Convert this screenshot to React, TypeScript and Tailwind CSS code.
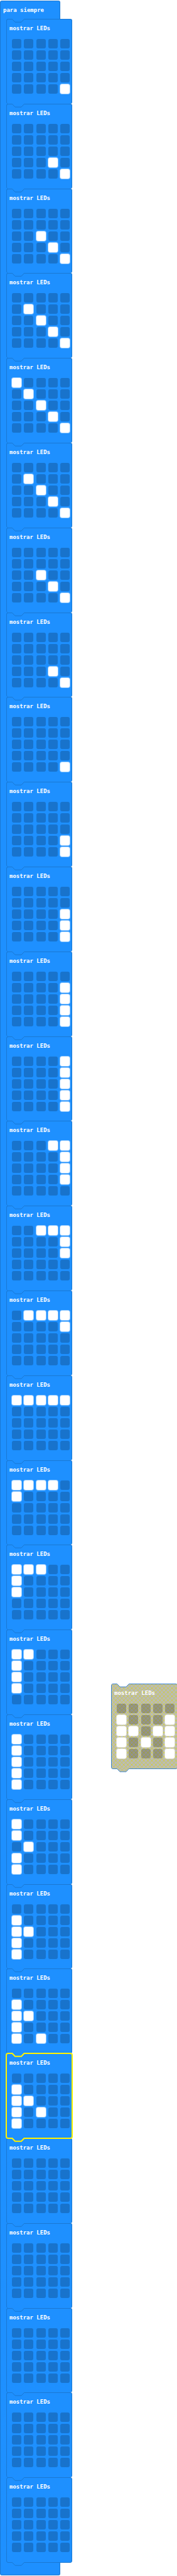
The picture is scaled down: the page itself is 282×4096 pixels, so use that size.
type Pattern = string;

const FRAMES: Pattern[] = [
  "..... ..... ..... ..... ....#",
  "..... ..... ..... ...#. ....#",
  "..... ..... ..#.. ...#. ....#",
  "..... .#... ..#.. ...#. ....#",
  "#.... .#... ..#.. ...#. ....#",
  "..... .#... ..#.. ...#. ....#",
  "..... ..... ..#.. ...#. ....#",
  "..... ..... ..... ...#. ....#",
  "..... ..... ..... ..... ....#",
  "..... ..... ..... ....# ....#",
  "..... ..... ....# ....# ....#",
  "..... ....# ....# ....# ....#",
  "....# ....# ....# ....# ....#",
  "...## ....# ....# ....# .....",
  "..### ....# ....# ..... .....",
  ".#### ....# ..... ..... .....",
  "##### ..... ..... ..... .....",
  "####. #.... ..... ..... .....",
  "###.. #.... #.... ..... .....",
  "##... #.... #.... #.... .....",
  "#.... #.... #.... #.... #....",
  "#.... #.... .#... #.... #....",
  "..... #.... ##... #.... #....",
  "..... #.... ##... #.... #.#..",
  "..... #.... ##... #.#.. #....",
  "..... ..... ..... ..... .....",
  "..... ..... ..... ..... .....",
  "..... ..... ..... ..... .....",
  "..... ..... ..... ..... .....",
  "..... ..... ..... ..... .....",
];

const SELECTED = 24;
const DISABLED: Pattern = "..... #...# ##.## #.#.# #...#";

function Leds({ pattern, off }: { pattern: Pattern; off: string }) {
  return (
    <div className="ml-2 grid w-[92px] grid-cols-[repeat(5,15px)] justify-between gap-y-[3px]">
      {pattern
        .replace(/ /g, "")
        .split("")
        .map((c, i) => (
          <input
            key={i}
            type="checkbox"
            defaultChecked={c === "#"}
            aria-label={`LED ${(i % 5) + 1}, ${Math.floor(i / 5) + 1}`}
            className={`m-0 block size-[15px] appearance-none rounded-[3px] checked:bg-white checked:ring-1 checked:ring-white/50 ${off}`}
          />
        ))}
    </div>
  );
}

type NotchProps = { place: string; fill: string; stroke: string; thick?: boolean; hatched?: boolean };

function Notch({ place, fill, stroke, thick = false, hatched = false }: NotchProps) {
  const body = "M1 0H21V1.5L20.5 1.5L16 6H6L1.5 1.5H1Z";
  return (
    <svg
      aria-hidden="true"
      width="22"
      height="8"
      viewBox={thick ? "0 -0.5 22 8" : "0 0 22 8"}
      className={`absolute left-[7px] ${place}`}
    >
      <path d={body} fill={fill} />
      {hatched && <path d={body} fill="url(#hatch)" />}
      <path
        d="M0 1.5H1.5L6 6.2H16L20.5 1.5H22"
        fill="none"
        stroke={stroke}
        strokeWidth={thick ? 2 : 1}
        strokeLinejoin="round"
      />
    </svg>
  );
}

function Block({ pattern, selected, last }: { pattern: Pattern; selected: boolean; last: boolean }) {
  const stroke = selected ? "#fff200" : "#1a78d2";
  const frame = selected
    ? "z-10 px-px pt-px outline-2 -outline-offset-1 outline-[#fff200]"
    : last
      ? "border border-[#1a78d2]"
      : "border border-b-0 border-[#1a78d2]";
  return (
    <section className={`relative flex flex-1 flex-col rounded-[3px] bg-[#1e90ff] pb-3 ${frame}`}>
      <Notch place={selected ? "-top-[2px] ml-px" : "-top-[2px]"} fill="#1e90ff" stroke={stroke} thick={selected} />
      {(selected || last) && (
        <Notch
          place={selected ? "-bottom-[6px] ml-px" : "-bottom-[7px]"}
          fill="#1e90ff"
          stroke={stroke}
          thick={selected}
        />
      )}
      <h2 className="mt-2 mb-[11px] pl-1 text-[9px] leading-3 font-bold whitespace-nowrap text-white">mostrar LEDs</h2>
      <Leds pattern={pattern} off="bg-[#1873cc]" />
    </section>
  );
}

function DisabledBlock() {
  return (
    <section className="relative flex w-[106px] flex-col rounded-[3px] border border-[#3f86cf] bg-[#bbbbbb] pb-4">
      <svg aria-hidden="true" className="absolute inset-0 size-full">
        <defs>
          <pattern id="hatch" width="6.4" height="6.4" patternUnits="userSpaceOnUse">
            <path d="M0 0L6.4 6.4M6.4 0L0 6.4" stroke="#cfcf38" strokeWidth="0.9" />
          </pattern>
        </defs>
        <rect width="100%" height="100%" fill="url(#hatch)" />
      </svg>
      <Notch place="-top-[2px]" fill="#ffffff" stroke="#3f86cf" />
      <Notch place="-bottom-[7px]" fill="#bbbbbb" stroke="#3f86cf" hatched />
      <h2 className="relative mt-2 mb-[11px] pl-1 text-[9px] leading-3 font-bold whitespace-nowrap text-white">
        mostrar LEDs
      </h2>
      <div className="relative">
        <Leds pattern={DISABLED} off="bg-black/22" />
      </div>
    </section>
  );
}

export default function App() {
  return (
    <main className="relative min-h-screen overflow-hidden bg-white font-['DejaVu_Sans_Mono',monospace]">
      <div className="flex min-h-screen w-[115px] flex-col py-px">
        <header className="h-[29px] w-24 rounded-t-[3px] border border-b-0 border-[#1a78d2] bg-[#1e90ff] pt-2 pl-1">
          <h1 className="text-[9px] leading-3 font-bold whitespace-nowrap text-white">para siempre</h1>
        </header>
        <div className="flex flex-1 flex-col border-l border-[#1a78d2] bg-[linear-gradient(#1e90ff,#1e90ff)] bg-[length:12px_100%] bg-no-repeat pl-[9px]">
          {FRAMES.map((p, i) => (
            <Block key={i} pattern={p} selected={i === SELECTED} last={i === FRAMES.length - 1} />
          ))}
        </div>
        <footer className="h-5 w-24 rounded-b-[3px] border border-t-0 border-[#1a78d2] bg-[#1e90ff]" />
      </div>
      <div className="absolute top-[65.36%] left-[177px]">
        <DisabledBlock />
      </div>
    </main>
  );
}
